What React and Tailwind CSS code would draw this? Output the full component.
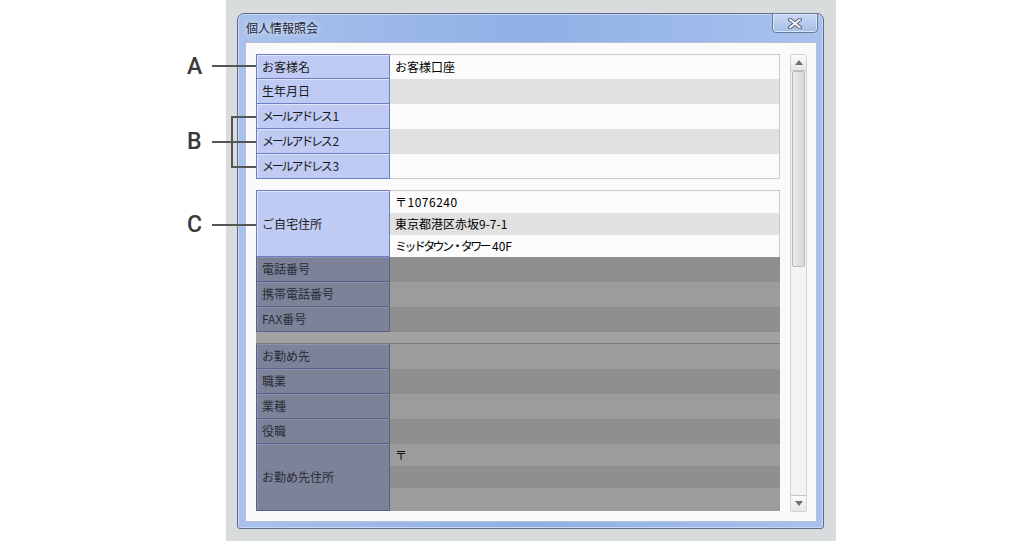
import React from 'react';

const jp = { fontFamily: '"Noto Sans CJK JP", "Noto Sans", sans-serif' };

const group1 = ['お客様名', '生年月日', 'メールアドレス1', 'メールアドレス2', 'メールアドレス3'];

function LabelText({ label }) {
  if (label.startsWith('メール')) {
    return (
      <span>
        <span className="tracking-[-2.2px]">メールアドレス</span>
        <span className="pl-[2px]">{label.slice(-1)}</span>
      </span>
    );
  }
  return label;
}

function LightRow({ label, value, first, shade, last }) {
  return (
    <div className="flex h-[25px]">
      <div className={`w-[134px] shrink-0 flex items-center pl-[5px] bg-[#bfcbf3] border-x border-b border-[#6e7ec6] shadow-[inset_1px_1px_0_#dfe5fb] text-[#1a1a1a] ${first ? 'border-t' : ''}`}>
        <LabelText label={label} />
      </div>
      <div className={`flex-1 flex items-center pl-[5px] border-r border-[#c9c9c9] ${first ? 'border-t' : ''} ${last ? 'border-b' : ''} ${shade ? 'bg-[#e1e1e1]' : 'bg-[#fbfbfb]'}`}>
        {value}
      </div>
    </div>
  );
}

function DarkRow({ label, shade }) {
  return (
    <div className="flex h-[25px]">
      <div className="w-[134px] shrink-0 flex items-center pl-[5px] bg-[#7c8298] border-x border-b border-[#5a608e] shadow-[inset_1px_1px_0_#8d93a8] text-[#2a2d3a]">
        {label}
      </div>
      <div className={`flex-1 ${shade ? 'bg-[#8f8f8f]' : 'bg-[#9c9c9c]'}`}></div>
    </div>
  );
}

function Note({ letter, className }) {
  return (
    <div className={`absolute flex items-center ${className}`}>
      <span className="w-[24px] text-[23px] font-medium leading-none text-[#3a3a3a]" style={{ fontFamily: 'Roboto, "Liberation Sans", sans-serif' }}>{letter}</span>
    </div>
  );
}

export default function App() {
  return (
    <div className="relative w-[1014px] h-[541px] bg-white overflow-hidden text-[12px]" style={jp}>
      <div className="ml-[226px] w-[610px] h-[541px] bg-[#d9dcdd] pl-[11px] pt-[13px]">
        {/* window */}
        <div className="w-[587px] h-[516px] flex flex-col rounded-t-[7px] rounded-b-[3px] border border-[#5d6c8a] bg-gradient-to-r from-[#a9c1ec] via-[#8fafe5] to-[#a8c2ee] shadow-[inset_0_0_0_1px_#c9d8f4]">
          <div className="h-[28px] flex justify-between items-start">
            <span className="pl-[8px] pt-[5px] text-[12px] text-[#1f2430] [text-shadow:0_0_6px_#ffffff]">個人情報照会</span>
            <div className="mr-[5px] -mt-px w-[46px] h-[20px] rounded-b-[4px] border border-[#6b7a98] bg-gradient-to-b from-[#c9d8f3] to-[#a5bde9] shadow-[inset_0_0_0_1px_#dce6f8] flex items-center justify-center">
              <svg width="14" height="11" viewBox="0 0 14 11">
                <path d="M2 1.5 L12 9.5 M12 1.5 L2 9.5" stroke="#5b6275" strokeWidth="4" strokeLinecap="round" />
                <path d="M2 1.5 L12 9.5 M12 1.5 L2 9.5" stroke="#f6f7fa" strokeWidth="2" strokeLinecap="round" />
              </svg>
            </div>
          </div>
          <div className="mx-[6px] mb-[6px] ml-[7px] h-[480px] bg-[#fafafa] border border-[#b7c1d6] flex pl-[10px] pt-[11px]">
            {/* table */}
            <div className="w-[524px] h-[458px] overflow-hidden flex flex-col">
              {group1.map((l, i) => (
                <LightRow key={l} label={l} first={i === 0} last={i === 4} shade={i % 2 === 1} value={i === 0 ? 'お客様口座' : ''} />
              ))}
              <div className="h-[11px] shrink-0"></div>
              <div className="flex h-[67px] shrink-0">
                <div className="w-[134px] shrink-0 flex items-center pl-[5px] bg-[#bfcbf3] border border-[#6e7ec6] shadow-[inset_1px_1px_0_#dfe5fb] text-[#1a1a1a]">ご自宅住所</div>
                <div className="flex-1 flex flex-col border-t border-r border-[#c9c9c9]">
                  <div className="h-[22px] flex items-center pl-[5px] bg-[#fbfbfb] tracking-[0.5px]">〒1076240</div>
                  <div className="h-[22px] flex items-center pl-[5px] bg-[#e1e1e1]">東京都港区赤坂9-7-1</div>
                  <div className="flex-1 flex items-center pl-[5px] bg-[#fbfbfb]">
                    <span className="tracking-[-2.6px]">ミッドタウン・タワー</span>
                    <span className="pl-[3px]">40F</span>
                  </div>
                </div>
              </div>
              <DarkRow label="電話番号" shade />
              <DarkRow label="携帯電話番号" />
              <DarkRow label="FAX番号" shade />
              <div className="h-[12px] shrink-0 bg-[#a2a2a2] border-b border-[#7d7d7d]"></div>
              <DarkRow label="お勤め先" />
              <DarkRow label="職業" shade />
              <DarkRow label="業種" />
              <DarkRow label="役職" shade />
              <div className="flex h-[67px] shrink-0">
                <div className="w-[134px] shrink-0 flex items-center pl-[5px] bg-[#7c8298] border-x border-b border-[#5a608e] shadow-[inset_1px_1px_0_#8d93a8] text-[#2a2d3a]">お勤め先住所</div>
                <div className="flex-1 flex flex-col">
                  <div className="h-[22px] flex items-center pl-[5px] bg-[#9c9c9c] text-[#111]">〒</div>
                  <div className="h-[22px] bg-[#8f8f8f]"></div>
                  <div className="flex-1 bg-[#9c9c9c]"></div>
                </div>
              </div>
            </div>
            {/* scrollbar */}
            <div className="ml-[10px] w-[17px] h-[458px] flex flex-col border border-[#d2d2d2] bg-[#f3f3f3] rounded-[2px]">
              <div className="h-[16px] flex items-center justify-center border-b border-[#c4c4c4] bg-gradient-to-b from-[#fbfbfb] to-[#e6e6e6]">
                <svg width="8" height="5" viewBox="0 0 8 5"><path d="M4 0 L8 5 L0 5 Z" fill="#6b6f7a" /></svg>
              </div>
              <div className="h-[196px] mx-px rounded-[2px] border border-[#b8b8b8] bg-gradient-to-r from-[#ececec] via-[#e0e1e4] to-[#d6d7db]"></div>
              <div className="flex-1"></div>
              <div className="h-[16px] flex items-center justify-center border-t border-[#c4c4c4] bg-gradient-to-b from-[#fbfbfb] to-[#e6e6e6]">
                <svg width="8" height="5" viewBox="0 0 8 5"><path d="M0 0 L8 0 L4 5 Z" fill="#6b6f7a" /></svg>
              </div>
            </div>
          </div>
        </div>
      </div>

      {/* annotations */}
      <Note letter="A" className="left-[187px] top-[55px] h-[22px]" />
      <div className="absolute left-[212px] top-[65px] w-[44px] h-[2px] bg-[#555]"></div>

      <Note letter="B" className="left-[187px] top-[130px] h-[22px]" />
      <div className="absolute left-[212px] top-[141px] w-[20px] h-[2px] bg-[#555]"></div>
      <div className="absolute left-[231px] top-[116px] w-[2px] h-[52px] bg-[#555]"></div>
      <div className="absolute left-[231px] top-[116px] w-[25px] h-[2px] bg-[#555]"></div>
      <div className="absolute left-[231px] top-[141px] w-[25px] h-[2px] bg-[#555]"></div>
      <div className="absolute left-[231px] top-[166px] w-[25px] h-[2px] bg-[#555]"></div>

      <Note letter="C" className="left-[187px] top-[213px] h-[22px]" />
      <div className="absolute left-[212px] top-[224px] w-[44px] h-[2px] bg-[#555]"></div>
    </div>
  );
}
